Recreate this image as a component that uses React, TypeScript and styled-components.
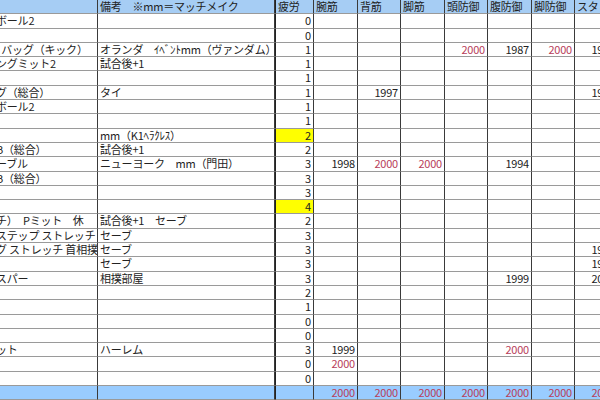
import React from "react";
import styled, { createGlobalStyle } from "styled-components";

const Global = createGlobalStyle`
  html, body { margin: 0; padding: 0; background: #fff; overflow: hidden; }
  body { font-family: "Noto Sans CJK JP", "Noto Sans", sans-serif; }
`;

const Sheet = styled.div`
  display: grid;
  grid-template-columns: 98px 177px 39px 44px 43px 44px 43px 44px 43px 43px;
  grid-auto-rows: 14.3px;
  width: 658px;
  font-size: 11px;
  letter-spacing: -0.2px;
  color: #222;
`;

type CellProps = { $bg?: string; $align?: string; $red?: boolean; $thickLeft?: boolean };

const Cell = styled.div<CellProps>`
  box-sizing: border-box;
  border-right: 1px solid #3a3a3a;
  border-bottom: 1px solid #9a9a9a;
  ${(p) => (p.$thickLeft ? "border-left: 1px solid #222;" : "")}
  background: ${(p) => p.$bg || "#fff"};
  color: ${(p) => (p.$red ? "#b8405a" : "#222")};
  text-align: ${(p) => p.$align || "left"};
  padding: 0 2px;
  line-height: 13px;
  white-space: nowrap;
  overflow: hidden;
`;

const Cut = styled.span`
  display: inline-block;
  margin-left: -6px;
`;

const HEAD = ["", "備考　※mm＝マッチメイク", "疲労", "腕筋", "背筋", "脚筋", "頭防御", "腹防御", "脚防御", "スタミナ"];

type Row = { a: string; b: string; f: string; y?: boolean; v: Record<number, [string, boolean?]> };

const rows: Row[] = [
  { a: "ボール2", b: "", f: "0", v: {} },
  { a: "", b: "", f: "0", v: {} },
  { a: "ﾟバッグ（キック）", b: "オランダ　ｲﾍﾞﾝﾄmm（ヴァンダム）", f: "1", v: { 6: ["2000", true], 7: ["1987"], 8: ["2000", true], 9: ["1998"] } },
  { a: "ングミット2", b: "試合後+1", f: "1", v: {} },
  { a: "", b: "", f: "1", v: {} },
  { a: "グ（総合）", b: "タイ", f: "1", v: { 4: ["1997"], 9: ["1998"] } },
  { a: "ボール2", b: "", f: "1", v: {} },
  { a: "", b: "", f: "1", v: {} },
  { a: "", b: "mm（K1ﾍﾗｸﾚｽ）", f: "2", y: true, v: {} },
  { a: "B（総合）", b: "試合後+1", f: "2", v: {} },
  { a: "ーブル", b: "ニューヨーク　mm（門田）", f: "3", v: { 3: ["1998"], 4: ["2000", true], 5: ["2000", true], 7: ["1994"] } },
  { a: "B（総合）", b: "", f: "3", v: {} },
  { a: "", b: "", f: "3", v: {} },
  { a: "", b: "", f: "4", y: true, v: {} },
  { a: "チ）　Pミット　休", b: "試合後+1　セーブ", f: "2", v: {} },
  { a: "ステップ ストレッチ", b: "セーブ", f: "3", v: {} },
  { a: "グ ストレッチ 首相撲", b: "セーブ", f: "3", v: { 9: ["1998"] } },
  { a: "", b: "セーブ", f: "3", v: { 9: ["1998"] } },
  { a: "スパー", b: "相撲部屋", f: "3", v: { 7: ["1999"], 9: ["2000"] } },
  { a: "", b: "", f: "2", v: {} },
  { a: "", b: "", f: "1", v: {} },
  { a: "", b: "", f: "0", v: {} },
  { a: "", b: "", f: "0", v: {} },
  { a: "ット", b: "ハーレム", f: "3", v: { 3: ["1999"], 7: ["2000", true] } },
  { a: "", b: "", f: "0", v: { 3: ["2000", true] } },
  { a: "", b: "", f: "0", v: {} },
];

export default function App() {
  return (
    <>
      <Global />
      <Sheet>
        {HEAD.map((h, i) => (
          <Cell key={"h" + i} $bg="#a6cdf4" $thickLeft={i === 2}>{h}</Cell>
        ))}
        {rows.map((r, ri) => (
          <React.Fragment key={ri}>
            <Cell>{r.a ? <Cut>{r.a}</Cut> : null}</Cell>
            <Cell>{r.b}</Cell>
            <Cell $align="right" $thickLeft $bg={r.y ? "#ffff00" : undefined}>{r.f}</Cell>
            {[3, 4, 5, 6, 7, 8, 9].map((c) => {
              const v = r.v[c];
              return (
                <Cell key={c} $align="right" $red={!!(v && v[1])}>
                  {v ? v[0] : ""}
                </Cell>
              );
            })}
          </React.Fragment>
        ))}
        {HEAD.map((_, i) => (
          <Cell key={"t" + i} $bg="#99ccff" $thickLeft={i === 2} $align="right" $red>
            {i >= 3 ? "2000" : ""}
          </Cell>
        ))}
      </Sheet>
    </>
  );
}
